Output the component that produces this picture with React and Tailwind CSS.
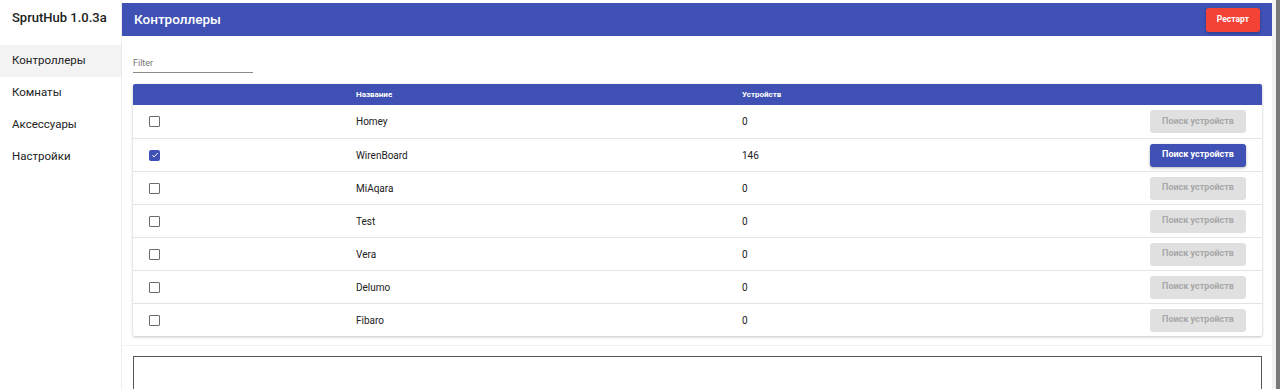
import { useState } from 'react';

const controllers = [
  { id: 'homey', name: 'Homey', devices: 0 },
  { id: 'wb', name: 'WirenBoard', devices: 146, checked: true },
  { id: 'miaqara', name: 'MiAqara', devices: 0 },
  { id: 'test', name: 'Test', devices: 0 },
  { id: 'vera', name: 'Vera', devices: 0 },
  { id: 'delumo', name: 'Delumo', devices: 0 },
  { id: 'fibaro', name: 'Fibaro', devices: 0 },
];

const menu = ['Контроллеры', 'Комнаты', 'Аксессуары', 'Настройки'];

function Checkbox({ checked }) {
  if (checked) {
    return (
      <div className="w-[11px] h-[11px] rounded-[2px] bg-[#3f51b5] flex items-center justify-center">
        <svg width="8" height="8" viewBox="0 0 8 8">
          <path d="M1.3 4.2 L3.1 5.9 L6.8 2" fill="none" stroke="#fff" strokeWidth="1" />
        </svg>
      </div>
    );
  }
  return <div className="w-[11px] h-[11px] rounded-[1px] border-[1.5px] border-[#6b6b6b]" />;
}

export default function App() {
  const [filter, setFilter] = useState('');
  const rows = controllers.filter(c => c.name.toLowerCase().includes(filter.toLowerCase()));

  return (
    <div className="flex w-[1280px] h-[389px] overflow-hidden bg-white font-['Roboto',sans-serif] text-[#212121]">
      {/* Sidebar */}
      <div className="w-[122px] shrink-0 border-r border-[#ececec] flex flex-col">
        <div className="h-[36px] pl-[12px] flex items-center text-[13px] font-medium text-[#222]">SprutHub 1.0.3a</div>
        <div className="mt-[9px] flex flex-col">
          {menu.map((item, i) => (
            <div
              key={item}
              className={`h-[32px] pl-[12px] flex items-center text-[11.5px] text-[#222] ${i === 0 ? 'bg-[#f3f3f3]' : ''}`}
            >
              {item}
            </div>
          ))}
        </div>
      </div>

      {/* Main */}
      <div className="flex-1 flex flex-col pt-[3px]">
        <div className="h-[33px] bg-[#3f51b5] flex items-center justify-between pl-[12px] pr-[12px] shrink-0">
          <span className="text-white text-[13.5px] font-medium">Контроллеры</span>
          <button className="h-[24px] px-[11px] rounded-[3px] bg-[#f44336] text-white text-[8.5px] font-bold shadow-[0_1px_3px_rgba(0,0,0,0.3)]">
            Рестарт
          </button>
        </div>

        <div className="pl-[11px] pr-[10px] flex flex-col">
          <div className="mt-[21px] w-[120px] border-b border-[#8a8a8a] pb-[3px]">
            <input
              value={filter}
              onChange={e => setFilter(e.target.value)}
              placeholder="Filter"
              className="block w-full h-[12px] leading-[12px] text-[9px] outline-none placeholder:text-[#757575] bg-transparent"
            />
          </div>

          <div className="mt-[11px] shadow-[0_1px_3px_rgba(0,0,0,0.25)] rounded-[2px] overflow-hidden">
            <div className="h-[21px] bg-[#3f51b5] grid grid-cols-[223px_386px_1fr] items-center text-white text-[8px] font-bold">
              <div />
              <div>Название</div>
              <div>Устройств</div>
            </div>
            {rows.map((c, i) => (
              <div
                key={c.id}
                className={`h-[33px] grid grid-cols-[223px_386px_1fr_auto] items-center text-[10px] ${i > 0 ? 'border-t border-[#e4e4e4]' : ''}`}
              >
                <div className="pl-[16px]"><Checkbox checked={c.checked} /></div>
                <div>{c.name}</div>
                <div>{c.devices}</div>
                <div className="pr-[16px]">
                  {c.checked ? (
                    <button className="w-[96px] h-[23px] rounded-[3px] bg-[#3f51b5] text-white text-[9px] font-bold shadow-[0_1px_3px_rgba(0,0,0,0.3)]">
                      Поиск устройств
                    </button>
                  ) : (
                    <button disabled className="w-[96px] h-[23px] rounded-[3px] bg-[#e0e0e0] text-[#a8a8a8] text-[9px] font-bold">
                      Поиск устройств
                    </button>
                  )}
                </div>
              </div>
            ))}
          </div>
        </div>

        <div className="mt-[9px] border-t border-[#f2f2f2] pt-[10px] pl-[11px] pr-[10px] flex-1 flex">
          <div className="flex-1 border border-[#555] border-b-0" />
        </div>
      </div>

      {/* Window edge */}
      <div className="w-[8px] shrink-0 flex">
        <div className="w-[4px] bg-[#f2f2f2]" />
        <div className="w-[4px] bg-[#7a7a7a]" />
      </div>
    </div>
  );
}
